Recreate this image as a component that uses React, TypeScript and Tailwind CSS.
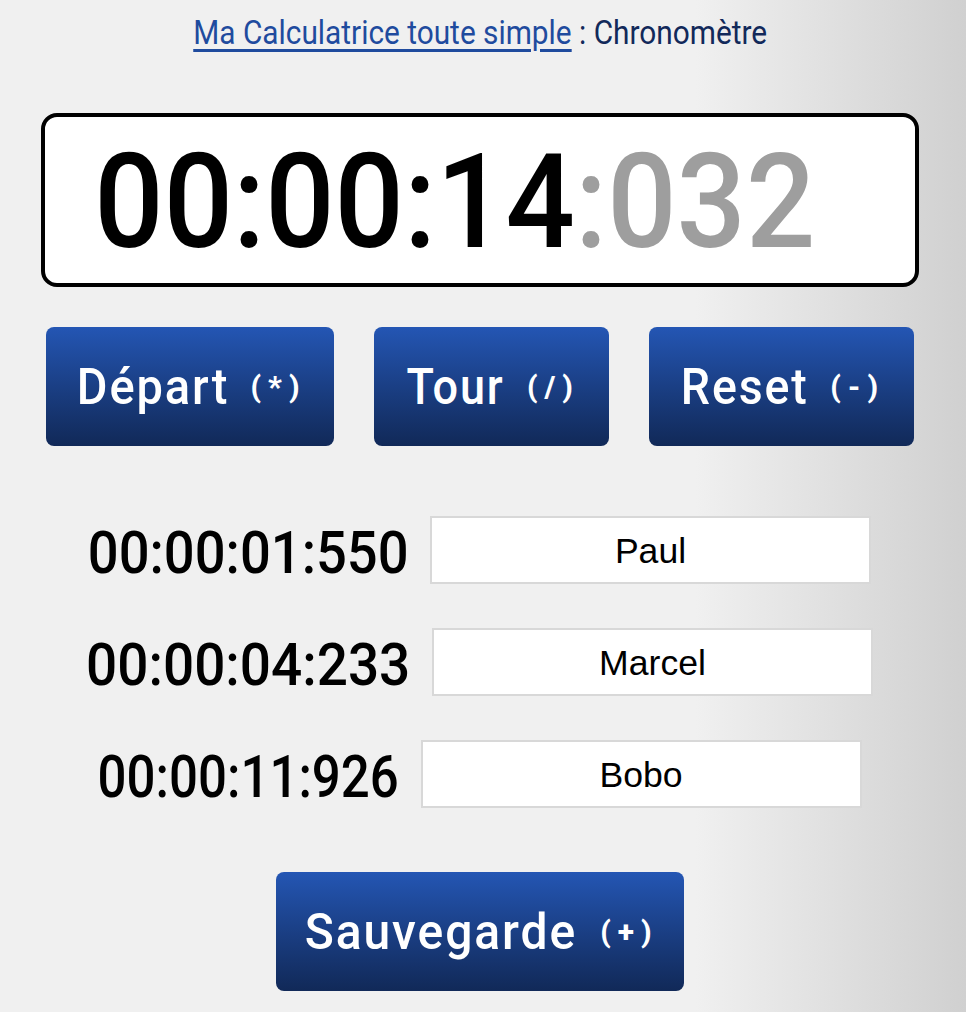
const font = "font-['Roboto',sans-serif]";

type ActionButtonProps = {
  label: string;
  shortcut: string;
  width: string;
  squeeze: string;
};

function ActionButton({ label, shortcut, width, squeeze }: ActionButtonProps) {
  return (
    <button
      type="button"
      className={`flex h-[119px] items-center justify-center gap-[17px] rounded-[8px] bg-gradient-to-b from-[#2456b4] to-[#112958] pr-[2px] text-white ${font} ${width}`}
    >
      <span className={`inline-block origin-center whitespace-nowrap text-[50px] font-medium leading-none tracking-[2px] ${squeeze}`}>
        {label}
      </span>
      <span className="inline-block whitespace-nowrap text-[30px] font-extrabold leading-none tracking-[7px]">
        {shortcut}
      </span>
    </button>
  );
}

type LapRowProps = {
  time: string;
  name: string;
  timeWidth: string;
  squeeze: string;
};

function LapRow({ time, name, timeWidth, squeeze }: LapRowProps) {
  return (
    <div className="flex h-[68px] items-center justify-center gap-[23px]">
      <span className={`flex justify-center pt-[5px] text-[60px] font-medium leading-none text-black ${font} ${timeWidth}`}>
        <span className={`inline-block origin-center whitespace-nowrap ${squeeze}`}>{time}</span>
      </span>
      <input
        readOnly
        value={name}
        className="h-[68px] w-[441px] border-2 border-[#d8d8d8] bg-white pt-[2px] text-center font-['Liberation_Sans',sans-serif] text-[35.6px] text-black outline-none"
      />
    </div>
  );
}

export default function App() {
  return (
    <div className="flex min-h-[1012px] flex-col bg-[linear-gradient(to_right,#f0f0f0_0%,#f0f0f0_72%,#d0d0d0_100%)] pr-[6px] pt-[12px]">
      <h1 className={`flex h-[40px] items-center justify-center text-[34px] font-normal leading-none ${font}`}>
        <span className="inline-block origin-center scale-x-[0.877] whitespace-nowrap text-[#12295a]">
          <a href="#" className="text-[#1f4b9e] underline underline-offset-[5px]">
            Ma Calculatrice toute simple
          </a>{" "}
          : Chronomètre
        </span>
      </h1>

      <div className="mx-auto mt-[61px] flex h-[174px] w-[878px] items-center justify-center rounded-[16px] border-[4px] border-black bg-white pr-[50px] pt-[4px]">
        <span className={`inline-block origin-center scale-x-[0.925] whitespace-nowrap text-[132px] font-medium leading-none ${font}`}>
          <span className="text-black">00:00:14</span>
          <span className="text-[#9e9e9e]">:032</span>
        </span>
      </div>

      <div className="mt-[40px] flex justify-center gap-[40px]">
        <ActionButton label="Départ" shortcut="(*)" width="w-[288px]" squeeze="scale-x-[0.94]" />
        <ActionButton label="Tour" shortcut="(/)" width="w-[235px]" squeeze="scale-x-[0.9]" />
        <ActionButton label="Reset" shortcut="(-)" width="w-[265px]" squeeze="scale-x-[0.93]" />
      </div>

      <div className="mt-[70px] flex flex-col gap-[44px]">
        <LapRow time="00:00:01:550" name="Paul" timeWidth="w-[318px]" squeeze="scale-x-[0.905]" />
        <LapRow time="00:00:04:233" name="Marcel" timeWidth="w-[322px]" squeeze="scale-x-[0.915]" />
        <LapRow time="00:00:11:926" name="Bobo" timeWidth="w-[299px]" squeeze="scale-x-[0.85]" />
      </div>

      <div className="mt-[64px] flex justify-center">
        <ActionButton label="Sauvegarde" shortcut="(+)" width="w-[408px]" squeeze="scale-x-[0.96]" />
      </div>
    </div>
  );
}
